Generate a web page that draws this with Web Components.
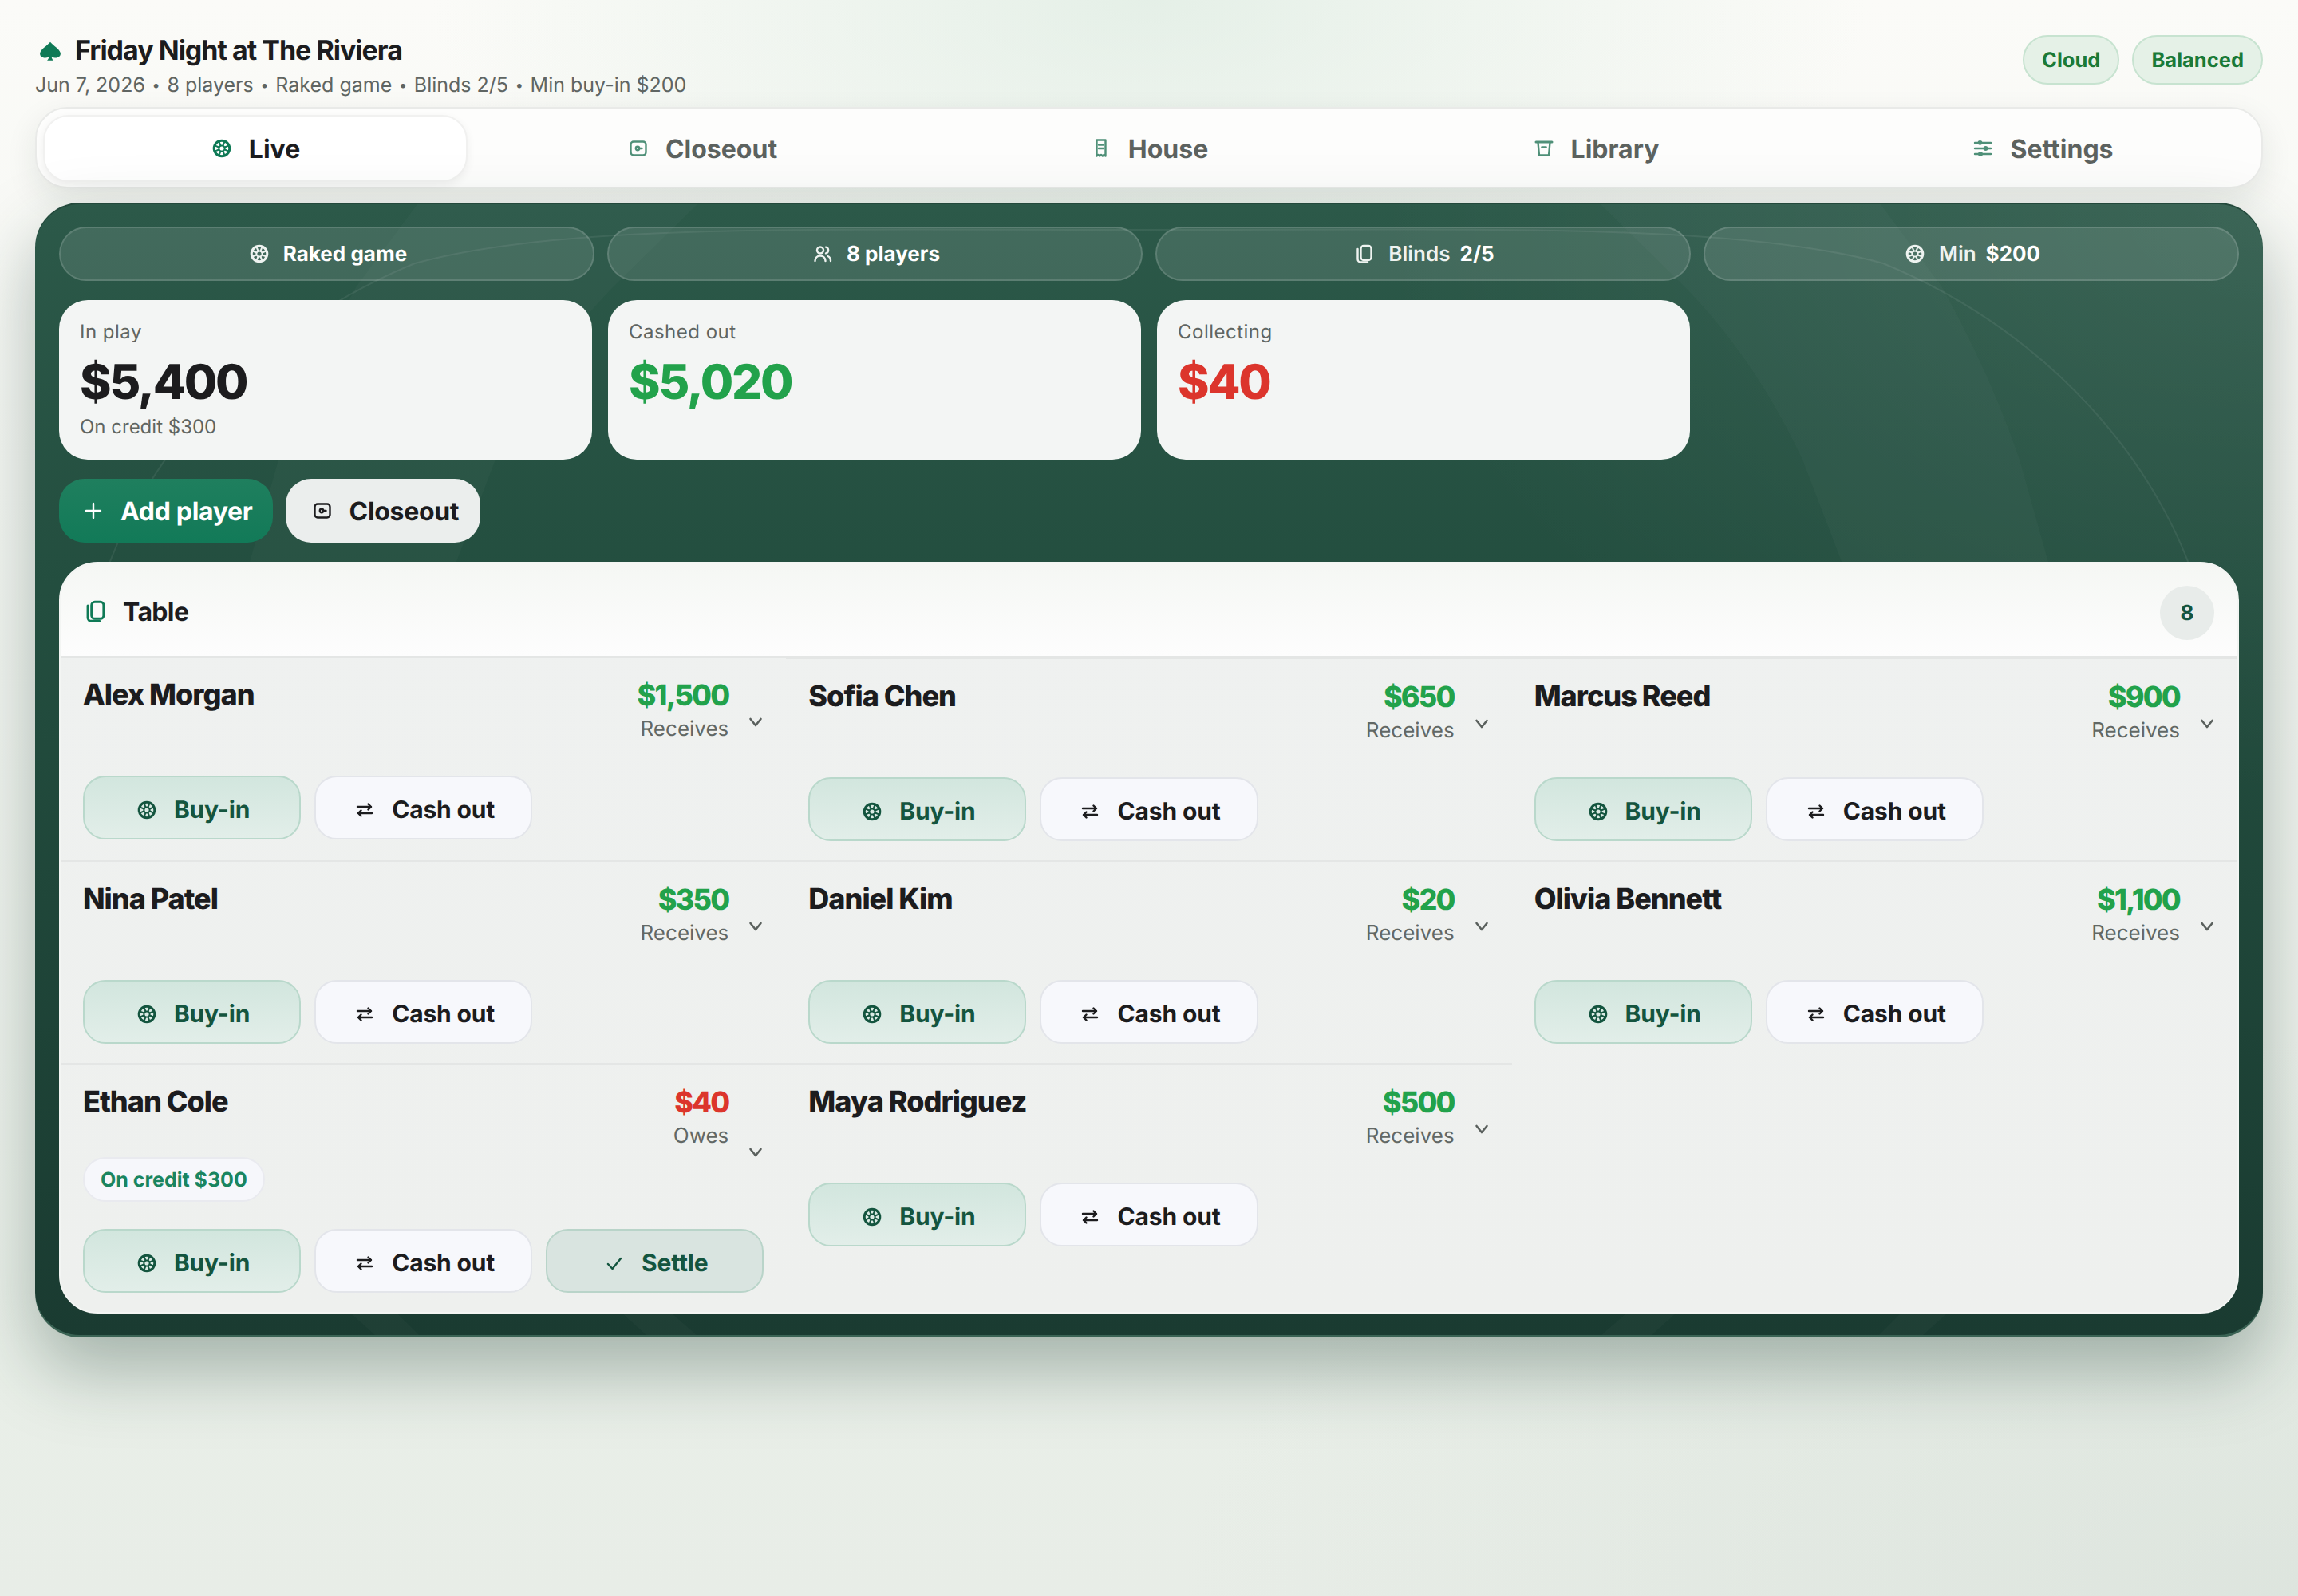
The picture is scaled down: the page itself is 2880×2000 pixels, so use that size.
<!DOCTYPE html>
<html lang="en">
<head>
<meta charset="utf-8">
<title>Friday Night at The Riviera</title>
<style>
  html {
    background:
      radial-gradient(900px 420px at 50% 0, rgba(214,232,220,.6), transparent 100%),
      radial-gradient(1400px 700px at 100% 100%, rgba(205,216,208,.4), transparent 100%),
      linear-gradient(180deg, #fbfbf8 0%, #f5f7f3 30%, #e9efe8 85%, #e8ede7 100%);
    min-height: 100%;
  }
  body {
    margin: 0;
    min-height: 2000px;
    font-family: Inter, "Noto Sans", sans-serif;
    color: #1c1c1e;
    text-rendering: geometricPrecision;
    -webkit-font-smoothing: antialiased;
  }
</style>
</head>
<body>
<app-shell>
  <app-header slot="header"
    title-text="Friday Night at The Riviera"
    sub="Jun 7, 2026 • 8 players • Raked game • Blinds 2/5 • Min buy-in $200">
    <status-badge>Cloud</status-badge>
    <status-badge>Balanced</status-badge>
  </app-header>

  <nav-tabs slot="tabs">
    <nav-tab icon="chip" active>Live</nav-tab>
    <nav-tab icon="safe">Closeout</nav-tab>
    <nav-tab icon="receipt">House</nav-tab>
    <nav-tab icon="archive">Library</nav-tab>
    <nav-tab icon="sliders">Settings</nav-tab>
  </nav-tabs>

  <felt-panel slot="panel">
    <info-pill slot="pills" icon="chip"><b>Raked game</b></info-pill>
    <info-pill slot="pills" icon="users"><b>8 players</b></info-pill>
    <info-pill slot="pills" icon="cards">Blinds<b class="v">2/5</b></info-pill>
    <info-pill slot="pills" icon="chip">Min<b class="v">$200</b></info-pill>

    <stat-card slot="stats" label="In play" value="$5,400" note="On credit $300"></stat-card>
    <stat-card slot="stats" label="Cashed out" value="$5,020" tone="pos"></stat-card>
    <stat-card slot="stats" label="Collecting" value="$40" tone="neg"></stat-card>

    <action-btn slot="actions" kind="primary" icon="plus">Add player</action-btn>
    <action-btn slot="actions" kind="light" icon="safe">Closeout</action-btn>

    <table-card slot="table" count="8">
      <player-cell first name="Alex Morgan" amount="$1,500" label="Receives"></player-cell>
      <player-cell name="Sofia Chen" amount="$650" label="Receives"></player-cell>
      <player-cell name="Marcus Reed" amount="$900" label="Receives"></player-cell>
      <player-cell name="Nina Patel" amount="$350" label="Receives"></player-cell>
      <player-cell name="Daniel Kim" amount="$20" label="Receives"></player-cell>
      <player-cell name="Olivia Bennett" amount="$1,100" label="Receives"></player-cell>
      <player-cell name="Ethan Cole" amount="$40" label="Owes" tone="neg" credit="On credit $300" settle></player-cell>
      <player-cell name="Maya Rodriguez" amount="$500" label="Receives"></player-cell>
    </table-card>
  </felt-panel>
</app-shell>

<script>
  const spokes = [0, 45, 90, 135, 180, 225, 270, 315]
    .map(a => `<line x1="12" y1="8" x2="12" y2="3" transform="rotate(${a + 22.5} 12 12)"/>`).join('');

  const ICONS = {
    chip: `<circle cx="12" cy="12" r="9.8" stroke-width="3"/><circle cx="12" cy="12" r="3.6" stroke-width="2"/><g stroke-width="2">${spokes}</g>`,
    safe: `<rect x="2.5" y="3.5" width="19" height="17" rx="3.5"/><circle cx="11" cy="12" r="2.2"/><path d="M13.5 12H16.5"/>`,
    receipt: `<path d="M6.5 1.5h11v20l-1.9-1.6-1.8 1.6-1.8-1.6-1.8 1.6-1.8-1.6-1.9 1.6z"/><path d="M9 7.5h6M9 12h6"/>`,
    archive: `<path d="M2 4h20" stroke-width="3"/><path d="M4.5 4.5 6 20.5h12l1.5-16"/><path d="M9.5 10.5h5" stroke-width="2.6"/>`,
    sliders: `<path d="M2 5h20M2 12h20M2 19h20"/><circle cx="8.5" cy="4.8" r="1.7" fill="currentColor"/><circle cx="15.5" cy="12" r="1.7" fill="currentColor"/><circle cx="9" cy="19" r="1.7" fill="currentColor"/>`,
    users: `<circle cx="9" cy="7.5" r="4"/><path d="M2.5 21c0-4 2.8-6.5 6.5-6.5s6.500 2.500 6.500 6.500"/><path d="M16 3.600a4 4 0 0 1 0 7.800"/><path d="M18.500 15c2 .8 3.500 3 3.500 6"/>`,
    cards: `<rect x="7.500" y="2" width="13" height="18" rx="3.500"/><path d="M3.500 6v13a3.500 3.500 0 0 0 3.500 3.500h9"/>`,
    plus: `<path d="M12 3v18M3 12h18"/>`,
    swap: `<path d="M3 8h17M16.500 4.500 20 8l-3.500 3.500M21 16H4M7.500 12.500 4 16l3.500 3.500"/>`,
    check: `<path d="M4 13l5.500 6L20 6"/>`
  };

  class XIcon extends HTMLElement {
    constructor() {
      super();
      const size = this.getAttribute('size') || 24;
      const sw = this.getAttribute('sw') || 2.4;
      const shadow = this.attachShadow({ mode: 'open' });
      shadow.innerHTML = `
        <style>
          :host { display: inline-flex; flex: none; line-height: 0; }
        </style>
        <svg width="${size}" height="${size}" viewBox="0 0 24 24" fill="none" stroke="currentColor"
          stroke-width="${sw}" stroke-linecap="round" stroke-linejoin="round">${ICONS[this.getAttribute('name')] || ''}</svg>
      `;
    }
  }
  customElements.define('x-icon', XIcon);

  class AppShell extends HTMLElement {
    constructor() {
      super();
      const shadow = this.attachShadow({ mode: 'open' });
      shadow.innerHTML = `
        <style>
          :host {
            display: flex;
            flex-direction: column;
            padding: 44px 44px 0;
          }
          .gap { height: 18px; }
        </style>
        <slot name="header"></slot>
        <slot name="tabs"></slot>
        <div class="gap"></div>
        <slot name="panel"></slot>
      `;
    }
  }
  customElements.define('app-shell', AppShell);

  class AppHeader extends HTMLElement {
    constructor() {
      super();
      const sub = this.getAttribute('sub').replace(/•/g, '<span class="dot">•</span>');
      const shadow = this.attachShadow({ mode: 'open' });
      shadow.innerHTML = `
        <style>
          :host {
            display: flex;
            justify-content: space-between;
            align-items: flex-start;
            height: 78px;
            margin-bottom: 12px;
          }
          .title {
            display: flex;
            align-items: center;
            gap: 14px;
            font-size: 34px;
            line-height: 40px;
            font-weight: 700;
            letter-spacing: -1px;
            color: #1c1c1e;
          }
          .title svg { margin-left: 2px; display: block; }
          .sub {
            margin-top: 7px;
            font-size: 25px;
            line-height: 32px;
            color: #5f6562;
          }
          .dot {
            font-size: 18px;
            line-height: 0;
            margin: 0 1.700px;
            vertical-align: 2px;
          }
          .badges { display: flex; gap: 16px; }
        </style>
        <div>
          <div class="title">
            <svg width="34" height="27" viewBox="0 0 24 24" preserveAspectRatio="none" fill="#0f7a56">
              <path d="M12 1.500C9 6 4 9 3 13.500c-.7 3.500 2 5.800 4.800 5.600 1.500-.1 2.700-.8 3.200-1.600-.2 1.600-.8 3.200-1.800 4.500h5.600c-1-1.300-1.600-2.900-1.800-4.500.5.8 1.700 1.500 3.200 1.600 2.800.2 5.500-2.100 4.800-5.600C20 9 15 6 12 1.500z"/>
            </svg>
            <span>${this.getAttribute('title-text')}</span>
          </div>
          <div class="sub">${sub}</div>
        </div>
        <div class="badges"><slot></slot></div>
      `;
    }
  }
  customElements.define('app-header', AppHeader);

  class StatusBadge extends HTMLElement {
    constructor() {
      super();
      const shadow = this.attachShadow({ mode: 'open' });
      shadow.innerHTML = `
        <style>
          :host {
            display: inline-flex;
            align-items: center;
            height: 62px;
            box-sizing: border-box;
            padding: 0 22px;
            border: 2px solid #c7e3d0;
            border-radius: 31px;
            background: #e5f1e7;
            color: #1a7a38;
            font-size: 25.500px;
            font-weight: 700;
          }
        </style>
        <slot></slot>
      `;
    }
  }
  customElements.define('status-badge', StatusBadge);

  class NavTabs extends HTMLElement {
    constructor() {
      super();
      const shadow = this.attachShadow({ mode: 'open' });
      shadow.innerHTML = `
        <style>
          :host {
            display: grid;
            grid-template-columns: repeat(5, 1fr);
            gap: 28px;
            padding: 8px 8px 6px;
            background: #fdfdfc;
            border: 2px solid #e9eae8;
            border-radius: 40px;
            box-shadow: 0 14px 40px rgba(20, 40, 30, .09);
          }
        </style>
        <slot></slot>
      `;
    }
  }
  customElements.define('nav-tabs', NavTabs);

  class NavTab extends HTMLElement {
    constructor() {
      super();
      const shadow = this.attachShadow({ mode: 'open' });
      shadow.innerHTML = `
        <style>
          :host {
            display: flex;
            align-items: center;
            justify-content: center;
            gap: 22px;
            height: 84px;
            box-sizing: border-box;
            padding-left: 2px;
            border-radius: 32px;
            border: 2px solid transparent;
            font-size: 32px;
            font-weight: 700;
            color: #5c625f;
          }
          :host([active]) {
            background: #fff;
            border-color: #f1f1f0;
            box-shadow: 0 4px 12px rgba(0, 0, 0, .06);
            color: #1c1c1e;
          }
          x-icon { color: #4f9078; }
          :host([active]) x-icon { color: #0f7a56; }
        </style>
        <x-icon name="${this.getAttribute('icon')}"></x-icon>
        <slot></slot>
      `;
    }
  }
  customElements.define('nav-tab', NavTab);

  class FeltPanel extends HTMLElement {
    constructor() {
      super();
      const shadow = this.attachShadow({ mode: 'open' });
      shadow.innerHTML = `
        <style>
          :host {
            display: block;
            position: relative;
            border-radius: 56px;
            background:
              radial-gradient(1500px 1000px at 100% 0, rgba(255, 255, 255, .075), transparent 75%),
              linear-gradient(180deg, #2c5949 0%, #234e3f 34%, #1a3b31 100%);
            box-shadow:
              inset 0 2px 0 #24493c,
              inset 0 -3px 0 #3a6354,
              0 40px 90px rgba(26, 59, 48, .34);
          }
          .decor {
            position: absolute;
            inset: 0;
            width: 100%;
            height: 100%;
            pointer-events: none;
          }
          .content {
            position: relative;
            display: flex;
            flex-direction: column;
            gap: 24px;
            padding: 30px;
          }
          .row {
            display: grid;
            grid-template-columns: repeat(4, 1fr);
            gap: 20px;
          }
          .row.pills { gap: 16px; }
          .actions { display: flex; gap: 16px; }
        </style>
        <svg class="decor" viewBox="44 254 2792 1422" preserveAspectRatio="none">
          <g fill="#fff" fill-opacity=".024">
            <path d="M523 256L446 360Q385 470 349 576L313 704H572L621 576Q680 450 768 360L874 256Z"/>
            <path d="M2357 256L2434 360Q2495 470 2531 576L2567 704H2308L2259 576Q2200 450 2112 360L2006 256Z"/>
            <path d="M440 1646H498L525 1673H470ZM780 1646H842L873 1673H810ZM2440 1646H2382L2355 1673H2410ZM2100 1646H2038L2007 1673H2070Z"/>
          </g>
          <path d="M120 760C160 600 300 420 520 330C700 280 1000 288 1440 288C1880 288 2180 280 2360 330C2580 420 2720 600 2760 760"
            fill="none" stroke="#fff" stroke-opacity=".07" stroke-width="2"/>
        </svg>
        <div class="content">
          <div class="row pills"><slot name="pills"></slot></div>
          <div class="row"><slot name="stats"></slot></div>
          <div class="actions"><slot name="actions"></slot></div>
          <slot name="table"></slot>
        </div>
      `;
    }
  }
  customElements.define('felt-panel', FeltPanel);

  class InfoPill extends HTMLElement {
    constructor() {
      super();
      const shadow = this.attachShadow({ mode: 'open' });
      shadow.innerHTML = `
        <style>
          :host {
            display: flex;
            align-items: center;
            justify-content: center;
            gap: 18px;
            height: 68px;
            box-sizing: border-box;
            padding-left: 4px;
            border: 2px solid rgba(255, 255, 255, .14);
            border-radius: 34px;
            background: rgba(255, 255, 255, .11);
            color: #eef3f0;
            font-size: 26px;
            font-weight: 600;
          }
          ::slotted(b) { font-weight: 700; color: #fff; }
          ::slotted(b.v) { margin-left: 12px; }
        </style>
        <x-icon name="${this.getAttribute('icon')}"></x-icon>
        <span><slot></slot></span>
      `;
    }
  }
  customElements.define('info-pill', InfoPill);

  class StatCard extends HTMLElement {
    constructor() {
      super();
      const note = this.getAttribute('note');
      const shadow = this.attachShadow({ mode: 'open' });
      shadow.innerHTML = `
        <style>
          :host {
            display: block;
            height: 200px;
            box-sizing: border-box;
            padding: 25px 26px;
            border-radius: 36px;
            background: #f3f5f4;
          }
          .label {
            font-size: 24px;
            line-height: 30px;
            letter-spacing: .48px;
            color: #5f6562;
          }
          .value {
            margin-top: 15px;
            font-size: 60px;
            line-height: 66px;
            font-weight: 800;
            letter-spacing: -2.300px;
            color: #1c1c1e;
          }
          :host([tone="pos"]) .value { color: #22a24b; }
          :host([tone="neg"]) .value { color: #dc352c; }
          .note {
            margin-top: 8px;
            font-size: 24px;
            line-height: 30px;
            color: #5f6562;
          }
        </style>
        <div class="label">${this.getAttribute('label')}</div>
        <div class="value">${this.getAttribute('value')}</div>
        ${note ? `<div class="note">${note}</div>` : ''}
      `;
    }
  }
  customElements.define('stat-card', StatCard);

  class ActionBtn extends HTMLElement {
    constructor() {
      super();
      const shadow = this.attachShadow({ mode: 'open' });
      shadow.innerHTML = `
        <style>
          :host {
            display: inline-flex;
            align-items: center;
            box-sizing: border-box;
            gap: 22px;
            height: 80px;
            border-radius: 32px;
            font-size: 32px;
            font-weight: 700;
            letter-spacing: -0.32px;
          }
          :host([kind="primary"]) {
            padding: 0 25px 0 31px;
            background: linear-gradient(180deg, #1f7f5e, #127a58);
            color: #fff;
          }
          :host([kind="light"]) {
            padding: 0 27px 0 34px;
            background: #ebeeed;
            color: #1c1c1e;
          }
        </style>
        <x-icon name="${this.getAttribute('icon')}" size="24"></x-icon>
        <slot></slot>
      `;
    }
  }
  customElements.define('action-btn', ActionBtn);

  class TableCard extends HTMLElement {
    constructor() {
      super();
      const shadow = this.attachShadow({ mode: 'open' });
      shadow.innerHTML = `
        <style>
          :host {
            display: block;
            border: 2px solid #f3f5f3;
            border-radius: 48px;
            overflow: hidden;
            background: linear-gradient(180deg, #eff1f0, #eef0ee);
          }
          header {
            display: flex;
            align-items: center;
            gap: 20px;
            box-sizing: content-box;
            height: 108px;
            padding: 8px 29px 0 30px;
            background: linear-gradient(180deg, #f5f7f4, #fdfdfd);
            border-bottom: 2px solid #e4e6e5;
            font-size: 32px;
            font-weight: 700;
            letter-spacing: -0.64px;
          }
          x-icon { color: #0f7a56; margin-bottom: 4px; }
          .name { margin-bottom: 4px; }
          .count {
            margin-left: auto;
            display: flex;
            align-items: center;
            justify-content: center;
            width: 68px;
            height: 68px;
            border-radius: 50%;
            background: #e8ecea;
            color: #14553f;
            font-size: 26px;
            letter-spacing: 0;
          }
          .cells {
            display: grid;
            grid-template-columns: repeat(3, 1fr);
          }
        </style>
        <header>
          <x-icon name="cards" size="28" sw="2.600"></x-icon>
          <span class="name">Table</span>
          <span class="count">${this.getAttribute('count')}</span>
        </header>
        <div class="cells"><slot></slot></div>
      `;
    }
  }
  customElements.define('table-card', TableCard);

  class RowBtn extends HTMLElement {
    constructor() {
      super();
      const shadow = this.attachShadow({ mode: 'open' });
      shadow.innerHTML = `
        <style>
          :host {
            display: flex;
            align-items: center;
            justify-content: center;
            gap: 22px;
            height: 80px;
            box-sizing: border-box;
            padding: 5px 0 0 4px;
            border: 2px solid #e3e5ea;
            border-radius: 28px;
            background: #f7f8fc;
            color: #1c1c1e;
            font-size: 30px;
            font-weight: 700;
            letter-spacing: -0.15px;
          }
          :host([kind="buy"]) {
            border-color: #b9d8cb;
            background: linear-gradient(180deg, #d2e6de, #e2eee9);
            color: #14553f;
          }
          :host([kind="settle"]) {
            border-color: #b9d4c9;
            background: #d9e4e0;
            color: #14553f;
          }
        </style>
        <x-icon name="${this.getAttribute('icon')}"></x-icon>
        <slot></slot>
      `;
    }
  }
  customElements.define('row-btn', RowBtn);

  class PlayerCell extends HTMLElement {
    constructor() {
      super();
      const credit = this.getAttribute('credit');
      const shadow = this.attachShadow({ mode: 'open' });
      shadow.innerHTML = `
        <style>
          :host {
            display: block;
            box-sizing: border-box;
            padding: 24px 28px;
            border-top: 2px solid #e4e6e5;
          }
          :host([first]) { border-top: 0; }
          .summary { display: flex; gap: 24px; }
          .main { flex: 1; min-width: 0; }
          .head {
            display: flex;
            justify-content: space-between;
            height: 92px;
          }
          .name {
            font-size: 36px;
            line-height: 44px;
            font-weight: 800;
            letter-spacing: -1px;
            color: #1c1c1e;
          }
          .money { text-align: right; }
          .amount {
            font-size: 36px;
            line-height: 46px;
            font-weight: 800;
            letter-spacing: -1.800px;
            color: #22a24b;
          }
          :host([tone="neg"]) .amount { color: #dc352c; }
          .label {
            margin-top: 4px;
            font-size: 26px;
            line-height: 32px;
            color: #626865;
          }
          .chev {
            align-self: center;
            margin-top: 24px;
            flex: none;
            display: block;
          }
          .credit {
            display: inline-flex;
            align-items: center;
            height: 56px;
            box-sizing: border-box;
            padding: 2px 20px 0;
            margin-bottom: 2px;
            border: 2px solid #e9eaef;
            border-radius: 28px;
            background: #f6f7fb;
            color: #198560;
            font-size: 25px;
            font-weight: 700;
          }
          .btns {
            display: grid;
            grid-template-columns: repeat(3, 1fr);
            gap: 17px;
            margin-top: 32px;
          }
        </style>
        <div class="summary">
          <div class="main">
            <div class="head">
              <div class="name">${this.getAttribute('name')}</div>
              <div class="money">
                <div class="amount">${this.getAttribute('amount')}</div>
                <div class="label">${this.getAttribute('label')}</div>
              </div>
            </div>
            ${credit ? `<span class="credit">${credit}</span>` : ''}
          </div>
          <svg class="chev" width="20" height="20" viewBox="0 0 20 20" fill="none" stroke="#5a605d"
            stroke-width="2.600" stroke-linecap="round" stroke-linejoin="round">
            <path d="M3.500 5 10 13l6.500-8"/>
          </svg>
        </div>
        <div class="btns">
          <row-btn kind="buy" icon="chip">Buy-in</row-btn>
          <row-btn icon="swap">Cash out</row-btn>
          ${this.hasAttribute('settle') ? '<row-btn kind="settle" icon="check">Settle</row-btn>' : ''}
        </div>
      `;
    }
  }
  customElements.define('player-cell', PlayerCell);
</script>
</body>
</html>
